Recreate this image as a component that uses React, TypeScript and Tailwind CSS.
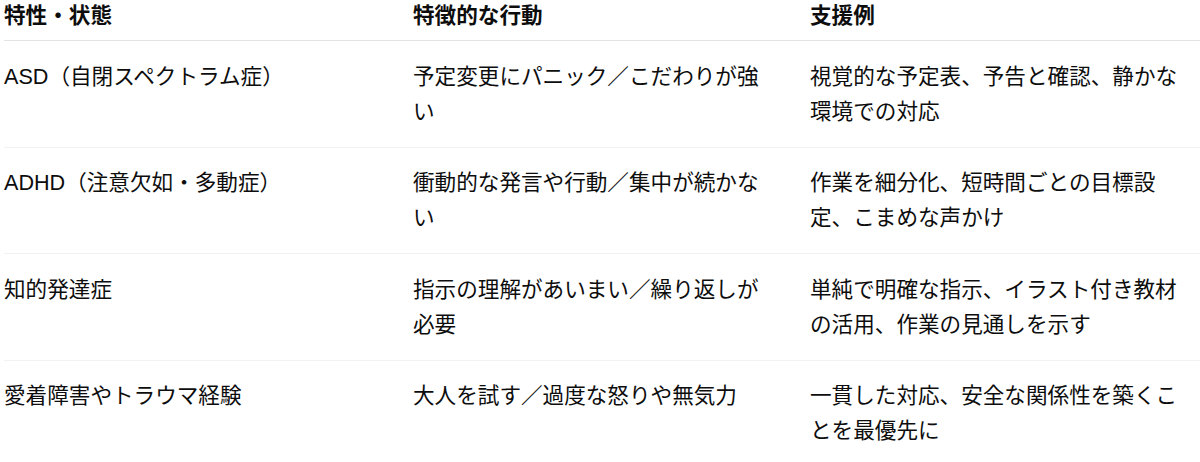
const ROWS = [
  {
    trait: "ASD（自閉スペクトラム症）",
    behavior: "予定変更にパニック／こだわりが強い",
    support: "視覚的な予定表、予告と確認、静かな環境での対応",
  },
  {
    trait: "ADHD（注意欠如・多動症）",
    behavior: "衝動的な発言や行動／集中が続かない",
    support: "作業を細分化、短時間ごとの目標設定、こまめな声かけ",
  },
  {
    trait: "知的発達症",
    behavior: "指示の理解があいまい／繰り返しが必要",
    support: "単純で明確な指示、イラスト付き教材の活用、作業の見通しを示す",
  },
  {
    trait: "愛着障害やトラウマ経験",
    behavior: "大人を試す／過度な怒りや無気力",
    support: "一貫した対応、安全な関係性を築くことを最優先に",
  },
];

export default function App() {
  return (
    <div
      className="w-[1200px] h-[462px] overflow-hidden bg-white text-[#0d0d0d]"
      style={{ fontFamily: '"Liberation Sans", "Noto Sans CJK JP", sans-serif' }}
    >
      <table className="ml-[4px] w-[1196px] table-fixed border-collapse text-left text-[21.6px] leading-[1.625]">
        <colgroup>
          <col className="w-[393px]" />
          <col className="w-[397px]" />
          <col className="w-[406px]" />
        </colgroup>
        <thead>
          <tr className="border-b border-[#e3e3e3]">
            <th className="pl-0 pr-4 pt-0 pb-[8px] font-bold leading-[32px]">特性・状態</th>
            <th className="px-4 pt-0 pb-[8px] font-bold leading-[32px]">特徴的な行動</th>
            <th className="pl-4 pr-5 pt-0 pb-[8px] font-bold leading-[32px]">支援例</th>
          </tr>
        </thead>
        <tbody>
          {ROWS.map((r) => (
            <tr key={r.trait} className="border-b border-[#f2f2f2] align-top">
              <td className="pl-0 pr-4 py-[17.7px]">{r.trait}</td>
              <td className="px-4 py-[17.7px]">{r.behavior}</td>
              <td className="pl-4 pr-5 py-[17.7px]">{r.support}</td>
            </tr>
          ))}
        </tbody>
      </table>
    </div>
  );
}
